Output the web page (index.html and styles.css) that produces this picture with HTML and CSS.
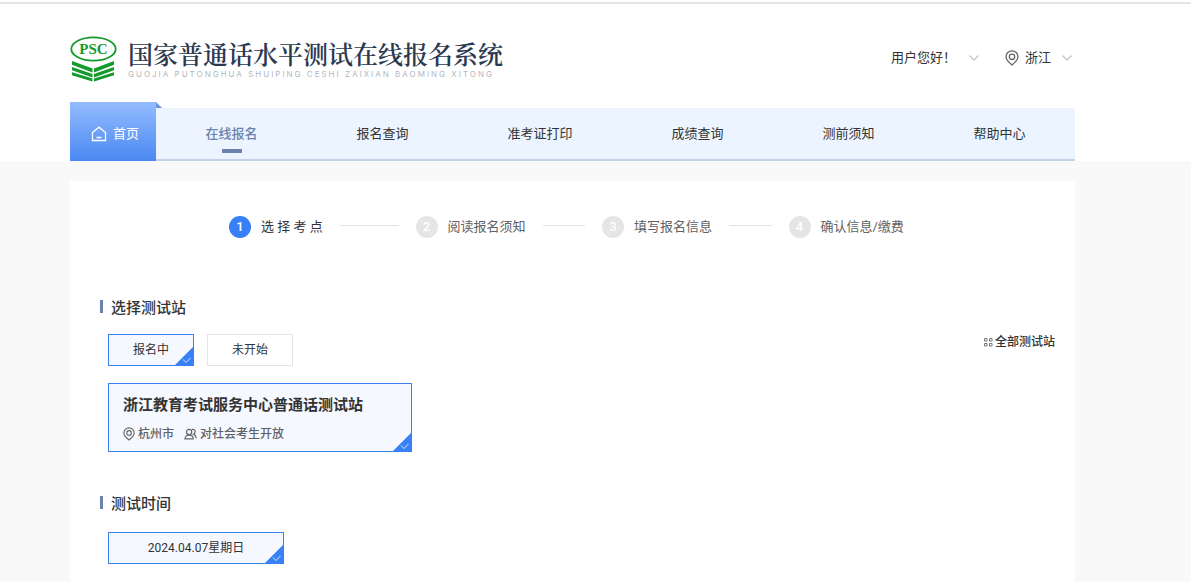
FILE: index.html
```html
<!doctype html>
<html lang="zh-CN">
  <head>
    <meta charset="UTF-8" />
    <meta name="viewport" content="width=device-width, initial-scale=1.0" />
    <title>国家普通话水平测试在线报名系统</title>
    <link rel="stylesheet" href="styles.css">
  </head>
  <body>
    <header class="header">
      <div class="wrap">
        <div class="top">
          <a href="#" class="logo">
            <svg class="logo-mark" viewBox="0 0 48 46" width="48" height="46">
              <ellipse cx="23.500" cy="13" rx="22.200" ry="11.700" fill="#fff" stroke="#129a2b" stroke-width="1.800" />
              <text x="23.500" y="18" text-anchor="middle" class="logo-psc">PSC</text>
              <g fill="#129a2b">
                <path d="M2 25 22.500 32.500v4L2 28.700zM2 31 22.500 38v3.500L2 34.300zM2 36.300 22.500 42.500v3L2 39.300z" />
                <path d="M44 25 24 32.500v4L44 28.700zM44 31 24 38v3.500L44 34.300zM44 36.300 24 42.500v3L44 39.300z" />
              </g>
            </svg>
            <span class="logo-text">
              <span class="logo-title">国家普通话水平测试在线报名系统</span>
              <span class="logo-sub">GUOJIA PUTONGHUA SHUIPING CESHI ZAIXIAN BAOMING XITONG</span>
            </span>
          </a>
          <div class="user">
            <button type="button" class="drop">
              <span>用户您好！</span>
              <svg class="arrow" viewBox="0 0 12 8" width="12" height="8"><path d="M1.500 1.500 6 6l4.500-4.500" /></svg>
            </button>
            <button type="button" class="drop drop-area">
              <svg class="pin" viewBox="0 0 14 16" width="14" height="16"><path d="M7 15C3 11.800 1 9.500 1 6.800a6 6 0 0 1 12 0C13 9.500 11 11.800 7 15z" /><circle cx="7" cy="6.800" r="2.700" /></svg>
              <span>浙江</span>
              <svg class="arrow" viewBox="0 0 12 8" width="12" height="8"><path d="M1.500 1.500 6 6l4.500-4.500" /></svg>
            </button>
          </div>
        </div>

        <nav class="nav">
          <a href="#" class="nav-home">
            <svg viewBox="0 0 16 16" width="16" height="16"><path d="M1.500 6.500 8 1.200l6.500 5.300v8H1.500zM5.500 11.500h5" /></svg>
            首页
          </a>
          <a href="#" class="nav-item active">在线报名</a>
          <a href="#" class="nav-item">报名查询</a>
          <a href="#" class="nav-item">准考证打印</a>
          <a href="#" class="nav-item">成绩查询</a>
          <a href="#" class="nav-item">测前须知</a>
          <a href="#" class="nav-item">帮助中心</a>
        </nav>
      </div>
    </header>

    <main class="wrap main">
      <div class="card">
        <ol class="steps">
          <li class="step current"><span class="num">1</span>选 择 考 点</li>
          <li class="step"><span class="num">2</span>阅读报名须知</li>
          <li class="step"><span class="num">3</span>填写报名信息</li>
          <li class="step"><span class="num">4</span>确认信息/缴费</li>
        </ol>

        <section class="section">
          <h2>选择测试站</h2>
          <div class="filter">
            <div class="options">
              <button type="button" class="option selected">
                报名中
                <svg class="corner" viewBox="0 0 18 18" width="18" height="18"><path class="tri" d="M18 0v18H0z" /><path class="tick" d="M8 12.500l3 3 4.500-4.500" /></svg>
              </button>
              <button type="button" class="option">未开始</button>
            </div>
            <a href="#" class="all">
              <svg viewBox="0 0 10 10" width="10" height="10"><path d="M1.500 1.500h2.500v2.500H1.500zM6.500 1.500H9v2.500H6.500zM1.500 6.500h2.500V9H1.500zM6.500 6.500H9V9H6.500z" /></svg>
              全部测试站
            </a>
          </div>
          <button type="button" class="station selected">
            <span class="station-name">浙江教育考试服务中心普通话测试站</span>
            <span class="station-info">
              <svg class="pin" viewBox="0 0 14 16" width="12" height="14"><path d="M7 15C3 11.800 1 9.500 1 6.800a6 6 0 0 1 12 0C13 9.500 11 11.800 7 15z" /><circle cx="7" cy="6.800" r="2.700" /></svg>
              <span class="city">杭州市</span>
              <svg class="people" viewBox="0 0 14 12" width="13" height="12"><circle cx="5.500" cy="3.800" r="2.800" /><path d="M1 11.300c0-2.600 1.800-4 4.500-4s4.500 1.400 4.500 4zM8.500 1c2.600-.3 3.800 1.200 3.500 2.800-.2 1.400-1 2.100-1.800 2.500 1.800.8 2.800 2 2.800 4.200" /></svg>
              <span>对社会考生开放</span>
            </span>
            <svg class="corner" viewBox="0 0 18 18" width="18" height="18"><path class="tri" d="M18 0v18H0z" /><path class="tick" d="M8 12.500l3 3 4.500-4.500" /></svg>
          </button>
        </section>

        <section class="section">
          <h2>测试时间</h2>
          <div class="options dates">
            <button type="button" class="option option-date selected">
              2024.04.07星期日
              <svg class="corner" viewBox="0 0 18 18" width="18" height="18"><path class="tri" d="M18 0v18H0z" /><path class="tick" d="M8 12.500l3 3 4.500-4.500" /></svg>
            </button>
          </div>
        </section>
      </div>
    </main>
  </body>
</html>
```
FILE: styles.css
```css
* {
  margin: 0;
  padding: 0;
  box-sizing: border-box;
}

body {
  display: flex;
  flex-direction: column;
  min-height: 100vh;
  background: #f9f9f9;
  color: #333;
  font-family: Roboto, "Noto Sans CJK SC", sans-serif;
  font-size: 13px;
  line-height: 20px;
}

a {
  color: inherit;
  text-decoration: none;
}

button {
  font: inherit;
  color: inherit;
  background: none;
  border: 0;
  cursor: pointer;
}

svg {
  flex: none;
  fill: none;
}

.wrap {
  width: 100%;
  max-width: 1075px;
  padding-left: 70px;
}

/* header */
.header {
  margin-top: 2px;
  border-top: 2px solid #e5e5e5;
  background: #fff;
  box-shadow: 0 -2px 0 #fff;
}

.top {
  display: flex;
  justify-content: space-between;
  height: 98px;
  padding-top: 32px;
}

.logo {
  display: flex;
  align-items: flex-start;
  gap: 10px;
}

.logo-psc {
  font-family: "Liberation Serif", serif;
  font-size: 15px;
  font-weight: 700;
  fill: #129a2b;
}

.logo-text {
  display: flex;
  flex-direction: column;
  white-space: nowrap;
}

.logo-title {
  font-family: "Noto Serif CJK SC", "Noto Sans CJK SC", serif;
  font-size: 25px;
  font-weight: 600;
  line-height: 34px;
  color: #2c3850;
}

.logo-sub {
  font-family: Inter, sans-serif;
  font-size: 8px;
  line-height: 8px;
  letter-spacing: 2px;
  color: #b4b7bf;
}

.user {
  display: flex;
  align-items: flex-start;
  gap: 25px;
  padding: 12px 2px 0 0;
}

.drop {
  display: flex;
  align-items: center;
  gap: 12px;
}

.drop-area {
  gap: 10px;
}

.drop-area .pin {
  margin-right: -4px;
}

.arrow {
  stroke: #c0c4cc;
  stroke-width: 1.3;
}

.pin,
.people {
  stroke: #666;
  stroke-width: 1.3;
}

/* nav */
.nav {
  display: flex;
  align-items: flex-end;
  height: 59px;
}

.nav-home {
  position: relative;
  display: flex;
  align-items: center;
  justify-content: center;
  gap: 6px;
  width: 86px;
  height: 59px;
  padding: 4px 0 0 4px;
  background: linear-gradient(#94bcff, #4a88f2);
  color: #fff;
}

.nav-home::after {
  content: "";
  position: absolute;
  left: 100%;
  top: 0;
  width: 6px;
  height: 6px;
  background: #6a95dc;
  clip-path: polygon(0 0, 100% 100%, 0 100%);
}

.nav-home svg {
  stroke: #fff;
  stroke-width: 1.3;
}

.nav-item {
  position: relative;
  flex: 1 1 auto;
  height: 53px;
  border-bottom: 2px solid #c5d3e8;
  background: #ecf5ff;
  line-height: 51px;
  text-align: center;
}

.nav-item.active {
  color: #6a82ad;
  font-weight: 500;
}

.nav-item.active::after {
  content: "";
  position: absolute;
  left: 50%;
  bottom: 6px;
  width: 20px;
  height: 4px;
  margin-left: -10px;
  background: #6a82ad;
}

/* main */
.main {
  display: flex;
  flex: 1;
  margin-top: 20px;
}

.card {
  flex: 1;
  padding: 35px 20px 18px 30px;
  background: #fff;
}

.steps {
  display: flex;
  width: 746px;
  max-width: 100%;
  margin: 0 auto 60px 129px;
  list-style: none;
}

.step {
  display: flex;
  flex: 1;
  align-items: center;
  color: #606266;
  white-space: nowrap;
}

.step:not(:last-child)::after {
  content: "";
  flex: 1;
  height: 1px;
  margin: 0 17px 3px;
  background: #e4e4e4;
}

.num {
  width: 22px;
  height: 22px;
  margin-right: 10px;
  border-radius: 50%;
  background: #e5e5e5;
  color: #fff;
  font-weight: 500;
  line-height: 22px;
  text-align: center;
}

.step.current {
  color: #333;
}

.current .num {
  background: #3880f5;
}

.section {
  padding-left: 8px;
  margin-bottom: 42px;
}

.section:last-child {
  margin-bottom: 0;
}

h2 {
  display: flex;
  align-items: center;
  gap: 8px;
  margin: 0 0 16px -8px;
  font-size: 15px;
  font-weight: 500;
  line-height: 20px;
}

h2::before {
  content: "";
  width: 3px;
  height: 13px;
  margin-bottom: 3px;
  background: #6a82ad;
}

.filter {
  display: flex;
  justify-content: space-between;
  align-items: flex-start;
  margin-bottom: 17px;
}

.options {
  display: flex;
  gap: 13px;
}

.dates {
  padding-top: 2px;
}

.option {
  position: relative;
  width: 86px;
  height: 32px;
  border: 1px solid #e4e4e4;
  background: #fff;
  font-size: 12px;
}

.option-date {
  width: 176px;
}

.option.selected,
.station.selected {
  border-color: #3880f5;
  background: #f5f8ff;
}

.corner {
  position: absolute;
  right: 0;
  bottom: 0;
}

.tri {
  fill: #3880f5;
}

.tick {
  stroke: #dce8ff;
}

.all {
  display: flex;
  align-items: center;
  gap: 2px;
  height: 16px;
  font-size: 12px;
  font-weight: 500;
}

.all svg {
  stroke: #777;
}

.station {
  position: relative;
  display: flex;
  flex-direction: column;
  width: 304px;
  height: 69px;
  padding: 11px 14px;
  border: 1px solid #e4e4e4;
  text-align: left;
}

.station-name {
  font-size: 15px;
  font-weight: 600;
}

.station-info {
  display: flex;
  align-items: center;
  gap: 3px;
  margin-top: 9px;
  color: #606266;
  font-size: 12px;
  font-weight: 500;
}

.city {
  margin-right: 7px;
}
```
